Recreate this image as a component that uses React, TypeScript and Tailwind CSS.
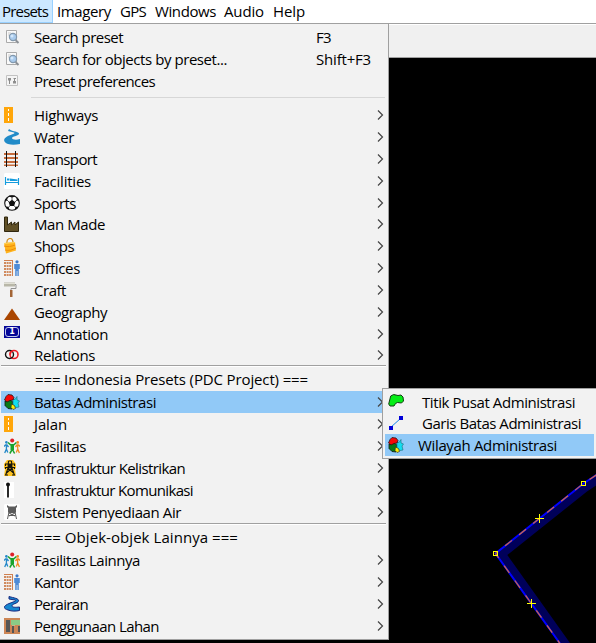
import { useLayoutEffect, useRef, useState, type ReactNode } from 'react';

/* Text stretched or tightened so that it fills an exact number of pixels. */
function Label({ text, width, className = '' }: { text: string; width: number; className?: string }) {
  const ref = useRef<HTMLSpanElement>(null);
  const [spacing, setSpacing] = useState(0);
  useLayoutEffect(() => {
    if (ref.current) {
      const natural = ref.current.getBoundingClientRect().width;
      setSpacing((width - natural) / text.length);
    }
  }, [text, width]);
  return (
    <span ref={ref} className={`shrink-0 whitespace-pre ${className}`} style={{ letterSpacing: spacing }}>
      {text}
    </span>
  );
}

const svg = (children: ReactNode) => (
  <svg viewBox="0 0 16 16" className="block size-4">{children}</svg>
);

const people = svg(
  <>
    <g stroke="#2589c9" strokeWidth="1.3" fill="none"><circle cx="2.4" cy="4.400" r=".7" fill="#2589c9" /><path d="M0 8.500l1.500-1.500h1.500l1.500 2M2.400 7v4L.7 15M2.400 11l1.400 3.500" /></g>
    <g stroke="#f28b22" strokeWidth="1.3" fill="none"><circle cx="13.7" cy="4.400" r=".7" fill="#f28b22" /><path d="M16 8.500l-1.500-1.500H13l-1.500 2M13.700 7v4l1.700 4M13.700 11l-1.400 3.500" /></g>
    <path d="M4 4.500l2.500 2.300h3.400l2.500-2.300M8.200 7v4.500L5.800 15.500M8.200 11l2.400 4.500" stroke="#19a22c" strokeWidth="1.500" fill="none" />
    <path d="M6.500 6.500h3.500v5.500H6.500z" fill="#19a22c" />
    <circle cx="8.200" cy="2.600" r="2" fill="#df2027" />
  </>
);
const road = svg(
  <>
    <path d="M0 0h9v16H0z" fill="#ffa60a" />
    <path d="M4 2h1v2H4zM4 6h1v3H4zM4 11h1v3H4z" fill="#fff" />
  </>
);
const office = svg(
  <>
    <path d="M0 0h9v16H8V1H0z" fill="#cf8050" />
    <g fill="#d08a5d">
      {[2, 5, 8, 11, 14].map((y) => <path key={y} d={`M0 ${y}h2v2H0zM2.6 ${y}h2v2h-2zM5.2 ${y}h2v2h-2z`} />)}
    </g>
    <circle cx="13" cy="1.8" r="1.6" fill="#3c78c8" />
    <path d="M10.2 4h5.6v5h-1v7h-1.4v-5h-.7v5h-1.5V9h-1z" fill="#4e8bd6" />
  </>
);
const areas = svg(
  <>
    <path d="M1 7l5-1 3 2-1 7-4-.5-3-3z" fill="#087a18" stroke="#111" strokeWidth=".8" />
    <path d="M9 5l2 .5 2-3v3.500l2.500 1L14 9l1 4-3 .5-3-2z" fill="#12dff0" stroke="#247986" strokeWidth=".7" />
    <path d="M2 2.500L4 .5l4 .5 2 2.500L9 6 6 6.500 3 8 .5 6z" fill="#f50808" stroke="#111" strokeWidth=".7" />
    <path d="M7.500 10l3 1.500 1 3-2.500 1-2-2z" fill="#ffee05" stroke="#222" strokeWidth=".6" />
  </>
);
const search = svg(
  <>
    <path d="M2.5 1.5h10v12h-10z" fill="#fafafa" stroke="#aaa" />
    <path d="M4 4h3M4 6h2" stroke="#ccc" />
    <path d="M11.5 11l3 3" stroke="#8b9096" strokeWidth="2" />
    <circle cx="9" cy="8" r="3.6" fill="#a9cbed" stroke="#8298ad" strokeWidth="1.2" />
    <circle cx="8" cy="7" r="1.5" fill="#d4e8fb" />
  </>
);

const icons: Record<string, ReactNode> = {
  search, road, people, office, areas,
  prefs: svg(
    <>
      <path d="M2.5 2.5h11v10h-11z" fill="#f5f5f5" stroke="#c2c2c2" />
      <path d="M4 5h3v2.500H4zM9 8h3v2.500H9z" fill="#909090" />
      <path d="M5.500 7v4M10.500 5v4M9.500 5.500h2.500" stroke="#8b8b8b" />
    </>
  ),
  water: svg(<path d="M5 0l-1 2 6 1.5c2 1-2 1.5-7 4C-1 10-1 13 4 15c4 1.300 8 .8 12 0v-5c-4 1.500-8 .5-8-1 0-1.500 6-2 7-4C15.500 2.500 9 3 5 0z" fill="#218bc8" />),
  rail: svg(
    <>
      <path d="M0 2h14v2H0zM0 6h14v2H0zM0 10h14v2H0zM0 13.500h14v1.500H0z" fill="#c66c3d" />
      <path d="M2.500 0v16M11.500 0v16" stroke="#111" />
    </>
  ),
  bed: svg(
    <>
      <rect width="16" height="16" rx="1.5" fill="#fff" />
      <path d="M1.500 4v8M14.500 5v7M1 9.500h14" stroke="#159cdd" strokeWidth="1.200" />
      <path d="M3 5.500h2.500v2H3zM6 5.500l7.500 1V8H6z" fill="#159cdd" />
    </>
  ),
  ball: svg(
    <>
      <circle cx="8" cy="8" r="7.300" fill="#fff" stroke="#111" strokeWidth="1.1" />
      <path d="M8 4.700l3.300 2.500-1.200 3.700H5.900L4.700 7.200zM4.500 1.500L8 2.600l3.500-1.100-1-1h-5zM.8 6.500l2.200-1 .8-2.800L1.500 4zM15.200 6.500l-2.200-1-.8-2.800L14.500 4zM1.500 11.500l3 .3 1 3.200L3 14zM14.500 11.500l-3 .3-1 3.200L13 14z" fill="#111" />
      <path d="M8 2v3M3 5l2 2M13 5l-2 2M6 10.500l-1.500 2M10 10.500l1.500 2" stroke="#111" strokeWidth=".7" />
    </>
  ),
  factory: svg(<path d="M.5 15.500V1h3v8l4-3v3l3.500-3v3l3.500-3v9.500z" fill="#605026" stroke="#30270f" />),
  shop: svg(
    <>
      <path d="M3 6C2 0 7-.5 8.500 2l.8 3" fill="none" stroke="#cd8a18" strokeWidth="1.200" />
      <path d="M0 5l11-1 1 8.500-10 3z" fill="#ffb31b" />
      <path d="M0 8c4 1.200 7 .5 11-1M1 12c4 1 7 0 11-2" stroke="#ed8d09" fill="none" />
      <path d="M0 5.500l11-1" stroke="#ffd45f" />
    </>
  ),
  craft: svg(
    <>
      <path d="M0 .5h11v4H0z" fill="#b8b7a8" />
      <path d="M0 1.500h11" stroke="#e1e0d5" />
      <path d="M11 2.500h1v4H7v3" stroke="#929292" fill="none" />
      <path d="M6 8h2.500v7H6z" fill="#a36536" />
    </>
  ),
  mountain: svg(<path d="M8 4.500L16 16H0z" fill="#aa4600" />),
  note: (
    <div className="flex h-3 w-4 items-center justify-center bg-[#050797]">
      <div className="flex h-[10px] w-[14px] items-center justify-center rounded-[3px] border border-[#c3c9ed] font-['DejaVu_Sans'] text-[8px] leading-[8px] font-bold text-white">1</div>
    </div>
  ),
  relation: svg(
    <>
      <circle cx="10" cy="7.500" r="4" fill="none" stroke="#ed1b23" strokeWidth="1.600" />
      <circle cx="5.500" cy="7.500" r="4" fill="none" stroke="#111" strokeWidth="1.400" />
      <path d="M9 3.700c-2 .5-3 2-2.800 4" fill="none" stroke="#ed1b23" strokeWidth="1.600" />
    </>
  ),
  tower: svg(
    <>
      <path d="M3 0h6l3 4v4l-1 1 1 7H0l1-7-1-1V4z" fill="#ffc421" />
      <path d="M4.500 1h3M4.500 1L4 8l-2.500 7.500M7.500 1L8 8l2.500 7.500M1 4h10M1 7.500h10M1.500 4v2M10.500 4v2M1.500 7v2M10.500 7v2M4.500 4L8 7.500M7.500 4L4 7.500M4 8l5.500 5M8 8l-5.500 5M1 15h3M8 15h3" fill="none" stroke="#16150c" strokeWidth="1.100" />
    </>
  ),
  pole: svg(
    <>
      <path d="M0 0h10v16H0z" fill="#fff" />
      <path d="M4 2v13.500" stroke="#111" strokeWidth="1.800" /><circle cx="4" cy="2.500" r="2" fill="#111" />
    </>
  ),
  tank: svg(
    <>
      <rect width="16" height="16" rx="1.500" fill="#fff" />
      <path d="M3 1l2 1.500h6L13 1v2l-1 1v4l-1 1H5L4 8V4L3 3z" fill="#5c5c5c" />
      <path d="M5 8l-1.500 7M11 8l1.500 7M4.500 11.500h7M5 9l6 3M11 9l-6 3" stroke="#5c5c5c" />
    </>
  ),
  river: svg(<path d="M5 .5L5 3l6 1c3 1-3 2-8 4.500-4 2.300-3.500 4 1 5.500 4 1.500 8 1.300 11.500.5V11c-4 .5-7.500.5-7.500-1.300 0-2 6-2.200 6.500-4.800C15 2.500 10 2 5 .5z" fill="#1686ce" stroke="#17277f" strokeWidth="1" />),
  land: svg(
    <>
      <path d="M0 0h16v16H0z" fill="#cd8655" />
      <path d="M2 2h4v12H2z" fill="#555" /><path d="M7 2h9v5H7z" fill="#8acb86" />
      <path d="M8 8h2v7H8zM14 8h2v6h-2z" fill="#555" /><path d="M10 7h4v8h-4z" fill="#cd8655" /><path d="M8 7h3v1H8z" fill="#c6b58c" />
    </>
  ),
  blob: svg(<path d="M.7 11l1-4 1-4 3-1.500 4.300 1 3-.5 2 2 .5 4-2 2-4-.5-2 1-1.500 2.500H2z" fill="#06ed17" stroke="#123d13" />),
  segment: svg(
    <>
      <path d="M2.500 12.500l10-9" stroke="#1686e8" />
      <path d="M1 11h4v4H1zM11 1h4v4h-4z" fill="#0000d8" />
    </>
  ),
};

type Item = { text: string; w: number; icon?: string; h?: string; key?: [string, number]; arrow?: boolean; on?: boolean };

function Row({ item }: { item: Item }) {
  return (
    <div className={`${item.h ?? 'h-[22px]'} flex items-start leading-[22px]`}>
      <div className={`flex h-[22px] w-[384px] shrink-0 items-start ${item.on ? 'bg-[#91c9f7]' : ''}`}>
        <div className="mt-[3px] ml-[3px] w-[30px] shrink-0">{item.icon && icons[item.icon]}</div>
        <div className="w-[282px] shrink-0"><Label text={item.text} width={item.w} /></div>
        {item.key && <Label text={item.key[0]} width={item.key[1]} />}
        {item.arrow && (
          <svg viewBox="0 0 8 12" className="mt-[5px] ml-[60px] h-3 w-2 shrink-0">
            <path d="M2 1.500L6.500 6 2 10.500" fill="none" stroke="#444" strokeWidth="1.200" />
          </svg>
        )}
      </div>
    </div>
  );
}

const top: Item[] = [
  { text: 'Search preset', w: 89, icon: 'search', key: ['F3', 15] },
  { text: 'Search for objects by preset...', w: 193, icon: 'search', key: ['Shift+F3', 55] },
  { text: 'Preset preferences', w: 121, icon: 'prefs' },
];
const standard: Item[] = [
  { text: 'Highways', w: 64, icon: 'road' },
  { text: 'Water', w: 40, icon: 'water' },
  { text: 'Transport', w: 63, icon: 'rail' },
  { text: 'Facilities', w: 57, icon: 'bed' },
  { text: 'Sports', w: 42, icon: 'ball', h: 'h-[21px]' },
  { text: 'Man Made', w: 71, icon: 'factory' },
  { text: 'Shops', w: 40, icon: 'shop' },
  { text: 'Offices', w: 46, icon: 'office' },
  { text: 'Craft', w: 32, icon: 'craft' },
  { text: 'Geography', w: 73, icon: 'mountain' },
  { text: 'Annotation', w: 74, icon: 'note', h: 'h-[21px]' },
  { text: 'Relations', w: 61, icon: 'relation', h: 'h-[21px]' },
];
const indonesia: Item[] = [
  { text: 'Batas Administrasi', w: 122, icon: 'areas', on: true },
  { text: 'Jalan', w: 33, icon: 'road' },
  { text: 'Fasilitas', w: 52, icon: 'people' },
  { text: 'Infrastruktur Kelistrikan', w: 151, icon: 'tower' },
  { text: 'Infrastruktur Komunikasi', w: 159, icon: 'pole' },
  { text: 'Sistem Penyediaan Air', w: 147, icon: 'tank' },
];
const others: Item[] = [
  { text: 'Fasilitas Lainnya', w: 106, icon: 'people' },
  { text: 'Kantor', w: 44, icon: 'office' },
  { text: 'Perairan', w: 54, icon: 'river' },
  { text: 'Penggunaan Lahan', w: 125, icon: 'land' },
];

const Divider = () => <div className="h-1 w-[385px]"><div className="h-[2px] border-t border-[#a0a0a0] bg-white" /></div>;

function MapView() {
  return (
    <svg viewBox="389 58 207 585" className="block h-[585px] w-[207px] bg-black">
      <path d="M596 475L583.500 483.500 495.500 553.500 559.500 643H570L507.300 555 587 491.500 596 485.500z" fill="#00005a" />
      <path d="M597 474.500L583.500 483.500 495.500 553.500 560 643.500" fill="none" stroke="#0000ff" strokeWidth="2" />
      <path d="M495.500 553.500L583.500 483.500 597 474.500" fill="none" stroke="#d66a3d" strokeWidth="1.200" strokeDasharray="8.800 9.100" strokeDashoffset="-12.300" />
      <path d="M495.500 553.500L560 643.500" fill="none" stroke="#d66a3d" strokeWidth="1.200" strokeDasharray="9 9.400" strokeDashoffset="3.600" />
      <g fill="none" stroke="#ffff00" shapeRendering="crispEdges">
        <path d="M493.500 551.500h4v4h-4zM581.500 481.500h4v4h-4zM535 518.500h9M539.500 514v9M527 603.500h9M531.500 599v9" />
      </g>
    </svg>
  );
}

function Submenu() {
  return (
    <div className="absolute top-[388px] left-[382px] h-[71px] w-[214px] border border-r-0 border-[#a0a0a0] bg-[#f2f2f2] pt-[2px] pl-[2px] leading-[22px]">
      <div className="flex h-[22px] pl-[3px]"><div className="mt-[2px] w-[34px]">{icons.blob}</div><Label text="Titik Pusat Administrasi" width={153} /></div>
      <div className="flex h-[21px] pl-[3px] leading-[20px]"><div className="mt-[2px] w-[34px]">{icons.segment}</div><Label text="Garis Batas Administrasi" width={159} /></div>
      <div className="flex h-[22px] w-[209px] bg-[#91c9f7] pl-[3px]"><div className="mt-[3px] w-[30px]">{icons.areas}</div><Label text="Wilayah Administrasi" width={139} /></div>
    </div>
  );
}

export default function App() {
  return (
    <div className="relative h-[643px] w-[596px] overflow-hidden bg-black font-['Open_Sans','Noto_Sans',sans-serif] text-[15px] text-black">
      <nav className="flex h-6 items-start border-b border-[#a0a0a0] bg-white leading-[22px]">
        <div className="h-[23px] w-[53px] border-r border-b border-[#99d1ff] bg-[#cce8ff] pl-[2px]"><Label text="Presets" width={46} /></div>
        <div className="w-[67px] pl-1"><Label text="Imagery" width={54} /></div>
        <div className="w-[35px]"><Label text="GPS" width={26} /></div>
        <div className="w-[69px]"><Label text="Windows" width={61} /></div>
        <div className="w-[49px]"><Label text="Audio" width={40} /></div>
        <Label text="Help" width={32} />
      </nav>
      <div className="flex">
        <main className="h-[616px] w-[389px] border-r border-b border-[#a0a0a0] bg-[#f2f2f2] pt-[2px] pl-[1px]">
          {top.map((item) => <Row key={item.text} item={item} />)}
          <div className="ml-[30px] h-3 w-[354px] pt-[5px]"><div className="h-px bg-[#d7d7d7]" /></div>
          {standard.map((item) => <Row key={item.text} item={{ ...item, arrow: true }} />)}
          <Divider />
          <div className="h-[22px] pl-[34px] leading-[20px]"><Label text="=== Indonesia Presets (PDC Project) ===" width={273} /></div>
          {indonesia.map((item) => <Row key={item.text} item={{ ...item, arrow: true }} />)}
          <Divider />
          <div className="h-[22px] pl-[34px] leading-[20px]"><Label text="=== Objek-objek Lainnya ===" width={203} /></div>
          {others.map((item) => <Row key={item.text} item={{ ...item, arrow: true }} />)}
        </main>
        <section className="w-[207px]">
          <div className="h-[34px] border-t border-b border-t-white border-b-[#a0a0a0] bg-[#f0f0f0]" />
          <MapView />
        </section>
      </div>
      <Submenu />
    </div>
  );
}
